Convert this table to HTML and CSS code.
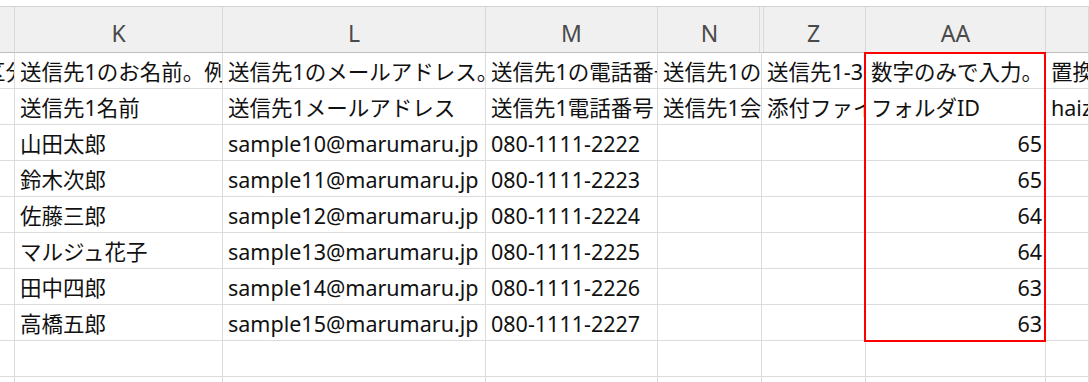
FILE: index.html
```html
<!DOCTYPE html>
<html lang="ja">
<head>
<meta charset="utf-8">
<title>Sheet</title>
<link rel="stylesheet" href="styles.css">
</head>
<body>
<div class="topbar"></div>
<div class="sheet">
  <div class="row head">
    <div class="cell"></div>
    <div class="cell">K</div>
    <div class="cell">L</div>
    <div class="cell">M</div>
    <div class="cell hide-l">N</div>
    <div class="cell hide-r">Z</div>
    <div class="cell">AA</div>
    <div class="cell"></div>
  </div>
  <div class="row">
    <div class="cell spill"><span>区分</span></div>
    <div class="cell">送信先1のお名前。例：山田太郎</div>
    <div class="cell">送信先1のメールアドレス。</div>
    <div class="cell">送信先1の電話番号</div>
    <div class="cell">送信先1の会社名</div>
    <div class="cell">送信先1-3の添付</div>
    <div class="cell">数字のみで入力。</div>
    <div class="cell">置換</div>
  </div>
  <div class="row">
    <div class="cell"></div>
    <div class="cell">送信先1名前</div>
    <div class="cell">送信先1メールアドレス</div>
    <div class="cell">送信先1電話番号</div>
    <div class="cell">送信先1会社名</div>
    <div class="cell">添付ファイル</div>
    <div class="cell">フォルダID</div>
    <div class="cell">haizoku</div>
  </div>
  <div class="row">
    <div class="cell"></div>
    <div class="cell">山田太郎</div>
    <div class="cell">sample10@marumaru.jp</div>
    <div class="cell">080-1111-2222</div>
    <div class="cell"></div>
    <div class="cell"></div>
    <div class="cell num">65</div>
    <div class="cell"></div>
  </div>
  <div class="row">
    <div class="cell"></div>
    <div class="cell">鈴木次郎</div>
    <div class="cell">sample11@marumaru.jp</div>
    <div class="cell">080-1111-2223</div>
    <div class="cell"></div>
    <div class="cell"></div>
    <div class="cell num">65</div>
    <div class="cell"></div>
  </div>
  <div class="row">
    <div class="cell"></div>
    <div class="cell">佐藤三郎</div>
    <div class="cell">sample12@marumaru.jp</div>
    <div class="cell">080-1111-2224</div>
    <div class="cell"></div>
    <div class="cell"></div>
    <div class="cell num">64</div>
    <div class="cell"></div>
  </div>
  <div class="row">
    <div class="cell"></div>
    <div class="cell">マルジュ花子</div>
    <div class="cell">sample13@marumaru.jp</div>
    <div class="cell">080-1111-2225</div>
    <div class="cell"></div>
    <div class="cell"></div>
    <div class="cell num">64</div>
    <div class="cell"></div>
  </div>
  <div class="row">
    <div class="cell"></div>
    <div class="cell">田中四郎</div>
    <div class="cell">sample14@marumaru.jp</div>
    <div class="cell">080-1111-2226</div>
    <div class="cell"></div>
    <div class="cell"></div>
    <div class="cell num">63</div>
    <div class="cell"></div>
  </div>
  <div class="row">
    <div class="cell"></div>
    <div class="cell">高橋五郎</div>
    <div class="cell">sample15@marumaru.jp</div>
    <div class="cell">080-1111-2227</div>
    <div class="cell"></div>
    <div class="cell"></div>
    <div class="cell num">63</div>
    <div class="cell"></div>
  </div>
  <div class="row">
    <div class="cell"></div><div class="cell"></div><div class="cell"></div><div class="cell"></div>
    <div class="cell"></div><div class="cell"></div><div class="cell"></div><div class="cell"></div>
  </div>
  <div class="row">
    <div class="cell"></div><div class="cell"></div><div class="cell"></div><div class="cell"></div>
    <div class="cell"></div><div class="cell"></div><div class="cell"></div><div class="cell"></div>
  </div>
  <div class="selection"></div>
</div>
</body>
</html>
```

FILE: styles.css
```css
html, body {
  margin: 0;
  padding: 0;
  background: #ffffff;
  overflow: hidden;
}
body {
  width: 1089px;
  height: 382px;
  font-family: "Noto Sans", "Noto Sans CJK JP", sans-serif;
  font-size: 21.5px;
  color: #111111;
}
.topbar {
  height: 6px;
  border-bottom: 1px solid #d4d4d4;
}
.sheet {
  position: relative;
}
.row {
  display: grid;
  grid-template-columns: 15px 208px 263px 172px 104px 104px 180px 43px;
  height: 36px;
}
.cell {
  box-sizing: border-box;
  border-right: 1px solid #dcdcdc;
  border-bottom: 1px solid #dcdcdc;
  padding: 2px 3px 0 5px;
  display: flex;
  align-items: center;
  white-space: nowrap;
  overflow: hidden;
  line-height: 1;
}
.row > .cell:first-child {
  padding: 2px 0 0 0;
}
.cell.num {
  justify-content: flex-end;
}
.cell.spill {
  justify-content: flex-end;
}
.cell.spill span {
  margin-right: -13px;
}
.head {
  height: 46px;
}
.head .cell {
  background: #f0f0f0;
  color: #4a4a4a;
  font-size: 23px;
  justify-content: center;
  padding: 8px 0 0 0;
  border-right-color: #d9d9d9;
  border-bottom-color: #bdbdbd;
}
.head .cell.hide-l {
  border-right-color: #f0f0f0;
  box-shadow: inset -1px 0 0 #f0f0f0, inset -2px 0 0 #d9d9d9;
}
.head .cell.hide-r {
  box-shadow: inset 1px 0 0 #f0f0f0, inset 2px 0 0 #d9d9d9;
}
.selection {
  position: absolute;
  left: 864px;
  top: 45px;
  width: 182px;
  height: 290px;
  box-sizing: border-box;
  border: 2px solid #ff0000;
  pointer-events: none;
}
```
